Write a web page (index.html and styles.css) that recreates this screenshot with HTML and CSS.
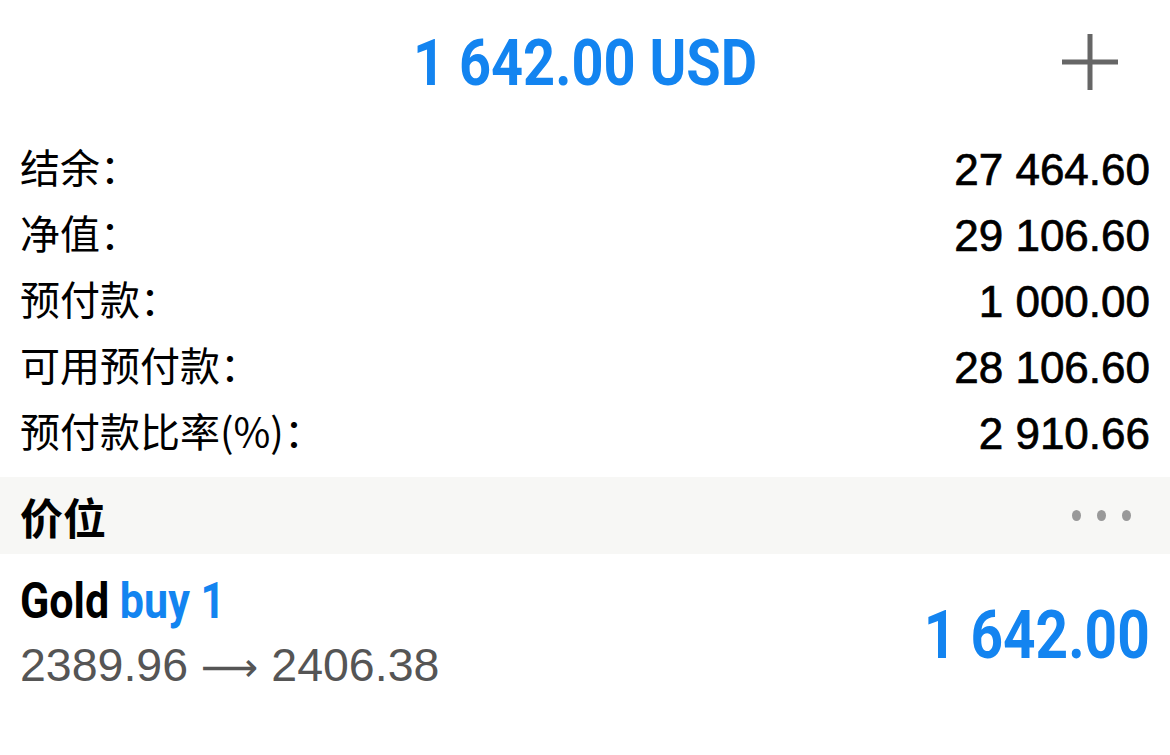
FILE: index.html
```html
<!DOCTYPE html>
<html lang="zh-CN">
<head>
    <meta charset="UTF-8">
    <meta name="viewport" content="width=device-width, initial-scale=1.0">
    <title>交易</title>
    <link rel="stylesheet" href="styles.css">
</head>
<body>
    <div id="app">
        <div class="header">
            <div class="total"><span class="condensed">1 642.00 USD</span></div>
            <button class="add-button" aria-label="添加">
                <svg width="56" height="56" viewBox="0 0 56 56">
                    <rect x="0" y="25.5" width="56" height="5" fill="#666"/>
                    <rect x="25.5" y="0" width="5" height="56" fill="#666"/>
                </svg>
            </button>
        </div>
        <ul class="summary">
            <li><span class="label">结余：</span><span class="value">27 464.60</span></li>
            <li><span class="label">净值：</span><span class="value">29 106.60</span></li>
            <li><span class="label">预付款：</span><span class="value">1 000.00</span></li>
            <li><span class="label">可用预付款：</span><span class="value">28 106.60</span></li>
            <li><span class="label">预付款比率(%)：</span><span class="value">2 910.66</span></li>
        </ul>
        <div class="section">
            <h2>价位</h2>
            <div class="more"><i></i><i></i><i></i></div>
        </div>
        <div class="position">
            <div class="position-info">
                <div class="symbol"><span class="condensed left">Gold <em>buy 1</em></span></div>
                <div class="prices">2389.96 <span class="arrow">⟶</span> 2406.38</div>
            </div>
            <div class="profit"><span class="condensed right">1 642.00</span></div>
        </div>
    </div>
</body>
</html>
```

FILE: styles.css
```css
body {
    margin: 0;
    padding: 0;
    background-color: #fff;
    font-family: "Liberation Sans", "Noto Sans CJK SC", sans-serif;
    color: #000;
}

#app {
    width: 1170px;
}

.condensed {
    display: inline-block;
    font-family: Roboto, sans-serif;
    font-weight: 700;
    transform: scaleX(0.86);
    white-space: nowrap;
}

.condensed.left {
    transform-origin: left center;
}

.condensed.right {
    transform-origin: right center;
}

.header {
    height: 137px;
    display: flex;
    align-items: center;
    justify-content: center;
    position: relative;
}

.total {
    font-size: 65px;
    color: #1384f0;
    margin-top: -12px;
}

.add-button {
    position: absolute;
    right: 52px;
    top: 34px;
    border: 0;
    padding: 0;
    background: none;
    line-height: 0;
}

.summary {
    list-style-type: none;
    margin: 0;
    padding: 0 20px;
}

.summary li {
    height: 66px;
    display: flex;
    justify-content: space-between;
    align-items: center;
}

.label {
    font-family: "Noto Sans CJK SC", sans-serif;
    font-size: 40px;
    margin-bottom: 8px;
}

.value {
    font-size: 44px;
    -webkit-text-stroke: 0.7px #000;
}

.section {
    margin-top: 10px;
    height: 77px;
    background-color: #f7f7f5;
    display: flex;
    align-items: center;
    justify-content: space-between;
    padding: 0 39px 0 20px;
}

.section h2 {
    margin: 0;
    font-family: "Noto Sans CJK SC", sans-serif;
    font-size: 43px;
    font-weight: 700;
}

.more {
    display: flex;
    gap: 16px;
}

.more i {
    width: 9px;
    height: 11px;
    border-radius: 50%;
    background-color: #999;
}

.position {
    display: flex;
    justify-content: space-between;
    align-items: center;
    padding: 16px 20px 0 20px;
}

.symbol {
    font-size: 50px;
    height: 62px;
    line-height: 62px;
}

.symbol em {
    font-style: normal;
    color: #1384f0;
}

.prices {
    margin-top: 6px;
    font-size: 46.5px;
    color: #555;
}

.arrow {
    font-family: "DejaVu Sans", sans-serif;
    font-size: 40px;
}

.profit {
    font-size: 66px;
    color: #1384f0;
    margin-top: 8px;
}
```
